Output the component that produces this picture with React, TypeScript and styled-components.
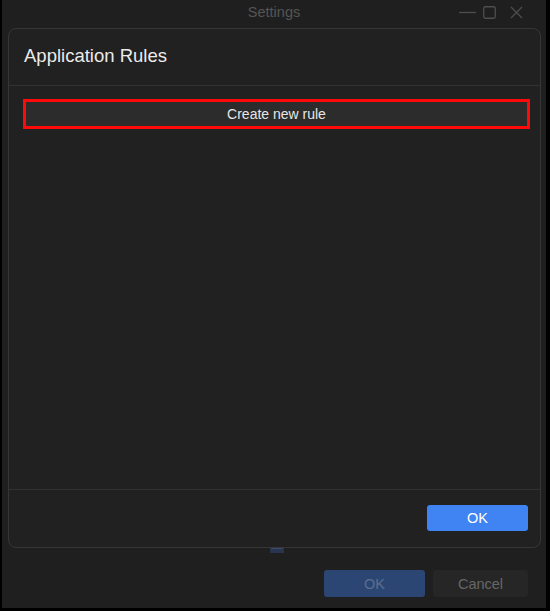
import React from "react";
import styled, { createGlobalStyle } from "styled-components";

const Global = createGlobalStyle`
  html, body { margin: 0; padding: 0; background: #000; }
  body { font-family: "Liberation Sans", Arial, sans-serif; }
  * { box-sizing: border-box; }
`;

const Frame = styled.div`
  width: 544px;
  height: 608px;
  margin-left: 2px;
  background: #1f1f1f;
  display: flex;
  flex-direction: column;
`;

const TitleBar = styled.div`
  height: 28px;
  display: grid;
  grid-template-columns: 1fr auto 1fr;
  align-items: center;
`;

const Title = styled.div`
  grid-column: 2;
  font-size: 14.5px;
  color: #555;
  padding-bottom: 4px;
`;

const Controls = styled.div`
  grid-column: 3;
  justify-self: end;
  display: flex;
  align-items: center;
  padding-right: 23px;
  padding-bottom: 4px;
`;

const Control = styled.span<{ $ml: number }>`
  display: flex;
  margin-left: ${(p) => p.$ml}px;
  color: #4e4e4e;
`;

const Card = styled.div`
  margin: 0 5px 0 6px;
  height: 520px;
  border: 1px solid #363636;
  border-radius: 8px;
  background: #212121;
  display: flex;
  flex-direction: column;
`;

const Header = styled.div`
  height: 57px;
  padding: 0 15px;
  display: flex;
  align-items: center;
  border-bottom: 1px solid #323232;
  font-size: 18.5px;
  color: #ebebeb;
  padding-bottom: 2px;
`;

const Body = styled.div`
  flex: 1;
  padding: 13px 10px 0 14px;
`;

const RuleButton = styled.button`
  width: 100%;
  height: 30px;
  border: 3px solid #ff0a0a;
  background: #2c2c2c;
  color: #e6e6e6;
  font-family: inherit;
  font-size: 14px;
  padding: 0;
  display: flex;
  align-items: center;
  justify-content: center;
`;

const Footer = styled.div`
  border-top: 1px solid #323232;
  padding: 15px 12px 16px 0;
  display: flex;
  justify-content: flex-end;
`;

const Button = styled.button<{ $variant: "primary" | "dimPrimary" | "dim" }>`
  height: ${(p) => (p.$variant === "primary" ? 26 : 27)}px;
  width: ${(p) => (p.$variant === "dim" ? 95 : 101)}px;
  border: none;
  border-radius: 3px;
  font-family: inherit;
  font-size: 14.5px;
  padding: 0;
  background: ${(p) =>
    p.$variant === "primary" ? "#4083f3" : p.$variant === "dimPrimary" ? "#2b4672" : "#262626"};
  color: ${(p) =>
    p.$variant === "primary" ? "#ffffff" : p.$variant === "dimPrimary" ? "#5b6f91" : "#666666"};
`;

const TabMarker = styled.div`
  align-self: center;
  width: 14px;
  height: 5px;
  margin-left: 5px;
  background: #29344f;
  border-top: 1px solid #3a4a70;
  border-radius: 2px 2px 0 0;
`;

const BottomRow = styled.div`
  display: flex;
  justify-content: flex-end;
  gap: 8px;
  padding: 17px 18px 0 0;
`;

export default function App() {
  return (
    <>
      <Global />
      <Frame>
        <TitleBar>
          <Title>Settings</Title>
          <Controls>
            <Control $ml={0}>
              <svg width="17" height="13" viewBox="0 0 17 13">
                <line x1="0" y1="6.5" x2="17" y2="6.5" stroke="currentColor" strokeWidth="1.3" />
              </svg>
            </Control>
            <Control $ml={7}>
              <svg width="13" height="13" viewBox="0 0 13 13">
                <rect x="0.75" y="0.75" width="11.5" height="11.5" rx="1.5" fill="none" stroke="currentColor" strokeWidth="1.3" />
              </svg>
            </Control>
            <Control $ml={14}>
              <svg width="13" height="13" viewBox="0 0 13 13">
                <path d="M1 1 L12 12 M12 1 L1 12" stroke="currentColor" strokeWidth="1.3" />
              </svg>
            </Control>
          </Controls>
        </TitleBar>
        <Card>
          <Header>Application Rules</Header>
          <Body>
            <RuleButton>Create new rule</RuleButton>
          </Body>
          <Footer>
            <Button $variant="primary">OK</Button>
          </Footer>
        </Card>
        <TabMarker />
        <BottomRow>
          <Button $variant="dimPrimary">OK</Button>
          <Button $variant="dim">Cancel</Button>
        </BottomRow>
      </Frame>
    </>
  );
}
